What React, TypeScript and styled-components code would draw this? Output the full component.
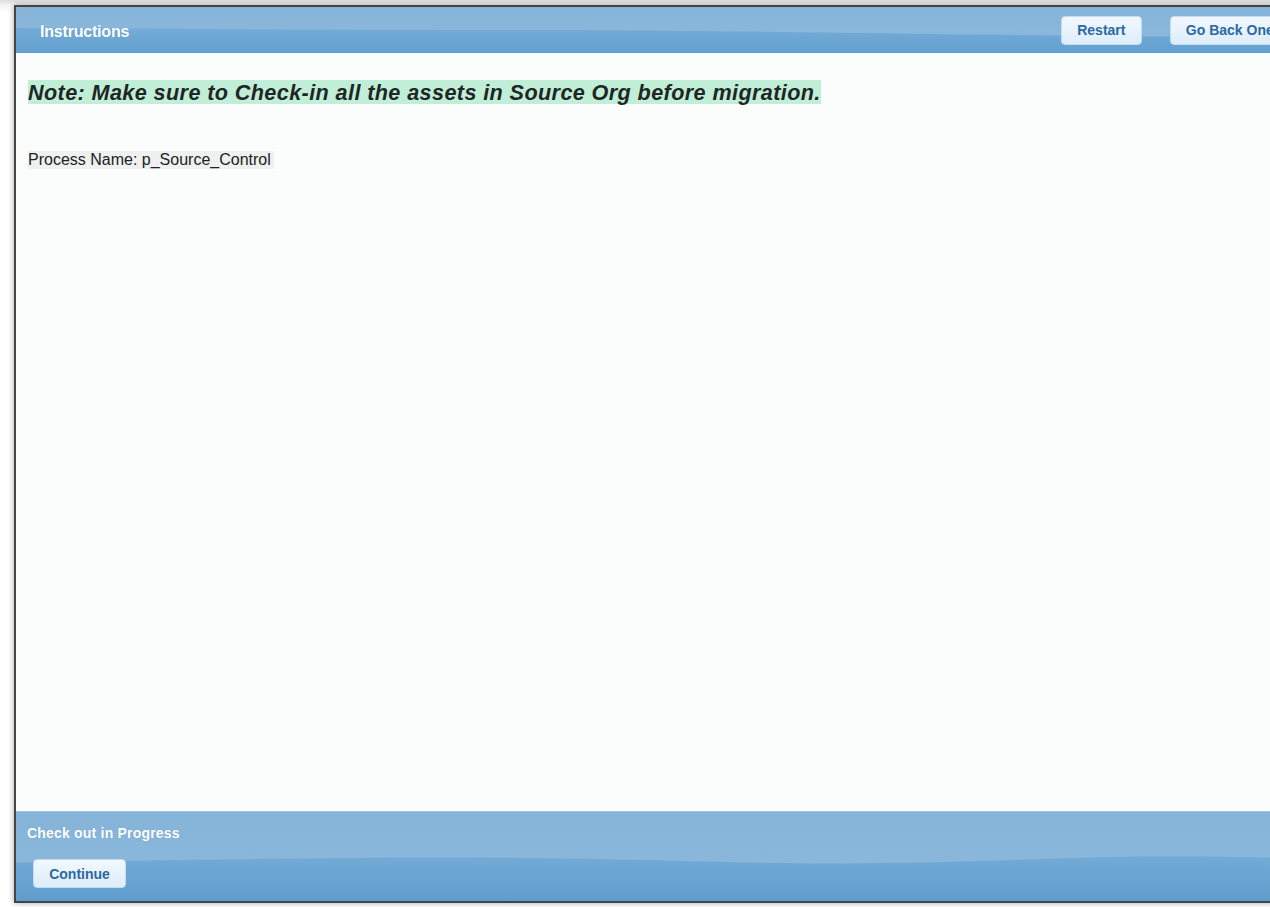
import React from "react";
import styled, { createGlobalStyle } from "styled-components";

const GlobalStyle = createGlobalStyle`
  html, body {
    margin: 0;
    padding: 0;
    background: #ffffff;
    overflow: hidden;
    font-family: "Liberation Sans", Arial, sans-serif;
  }
`;

const Page = styled.div`
  width: 1270px;
  height: 907px;
  overflow: hidden;
  padding: 5px 0 0 14px;
  box-sizing: border-box;
  background: linear-gradient(#dcdcdc 0, #f4f4f4 5px, #ffffff 12px);
`;

const Window = styled.div`
  width: 1308px;
  border: 2px solid #454545;
  box-shadow: 0 0 6px rgba(0, 0, 0, 0.35);
  display: flex;
  flex-direction: column;
  background: #fbfdfc;
`;

const Bar = styled.div<{ $height: number }>`
  position: relative;
  height: ${(p) => p.$height}px;
  background: linear-gradient(#86b4d9, #8cb9dc);
  overflow: hidden;
`;

const Header = styled(Bar)`
  border-bottom: 1px solid #5b9fd7;
  display: flex;
  align-items: center;
  justify-content: space-between;
  padding: 0 0 0 24px;
`;

const Footer = styled(Bar)`
  border-top: 1px solid #9ec4e2;
  box-sizing: border-box;
  display: flex;
  flex-direction: column;
  padding: 13px 0 0 11px;
`;

const Wave = styled.svg`
  position: absolute;
  left: 0;
  top: 0;
  width: 100%;
  height: 100%;
  pointer-events: none;
`;

const Layer = styled.div`
  position: relative;
  display: flex;
  align-items: center;
`;

const Title = styled.span`
  color: #ffffff;
  font-weight: bold;
  font-size: 16px;
  letter-spacing: -0.2px;
  margin-top: 4px;
  text-shadow: 0 0 1px rgba(40, 90, 140, 0.3);
`;

const FooterTitle = styled(Title)`
  font-size: 14px;
  letter-spacing: 0.2px;
  margin-top: 0;
`;

const Actions = styled(Layer)`
  gap: 28px;
  margin-top: 1px;
`;

const Button = styled.button<{ $width?: number }>`
  height: 29px;
  ${(p) => (p.$width ? `width: ${p.$width}px;` : "")}
  padding: 0 15px;
  border: 1px solid #c3dcf0;
  border-radius: 4px;
  background: linear-gradient(#f1f8fe, #ddedfa);
  color: #2c68a1;
  font-family: "Liberation Sans", Arial, sans-serif;
  font-weight: bold;
  font-size: 14px;
  white-space: nowrap;
  cursor: pointer;
`;

const Content = styled.main`
  height: 758px;
  padding: 27px 0 0 12px;
  box-sizing: border-box;
  color: #1e2424;
`;

const Note = styled.p`
  display: inline-block;
  margin: 0;
  padding-top: 1px;
  height: 24px;
  box-sizing: border-box;
  background: #c1eed6;
  font-weight: bold;
  font-style: italic;
  font-size: 21.6px;
  letter-spacing: 0.4px;
  line-height: 24px;
  color: #1e2626;
`;

const ProcessName = styled.p`
  margin: 47px 0 0;
  display: inline-block;
  background: #eef1f0;
  font-size: 16px;
  line-height: 18px;
  padding-right: 3px;
  color: #222;
`;

const ContinueRow = styled(Layer)`
  margin-top: 18px;
  padding-left: 6px;
`;

const App: React.FC = () => (
  <>
    <GlobalStyle />
    <Page>
      <Window>
        <Header $height={45}>
          <Wave viewBox="0 0 1308 45" preserveAspectRatio="none">
            <defs>
              <linearGradient id="hdark" x1="0" y1="0" x2="0" y2="1">
                <stop offset="0" stopColor="#74abd6" />
                <stop offset="1" stopColor="#64a1d0" />
              </linearGradient>
            </defs>
            <path
              d="M0 21 C200 22 400 23 560 23 C760 24 900 28 1308 31 V45 H0 Z"
              fill="url(#hdark)"
            />
          </Wave>
          <Layer>
            <Title>Instructions</Title>
          </Layer>
          <Actions>
            <Button $width={81}>Restart</Button>
            <Button>Go Back One Step</Button>
          </Actions>
        </Header>
        <Content>
          <Note>
            Note: Make sure to Check-in all the assets in Source Org before
            migration.
          </Note>
          <br />
          <ProcessName>Process Name: p_Source_Control</ProcessName>
        </Content>
        <Footer $height={90}>
          <Wave viewBox="0 0 1308 90" preserveAspectRatio="none">
            <defs>
              <linearGradient id="fdark" x1="0" y1="0" x2="0" y2="1">
                <stop offset="0" stopColor="#73aad6" />
                <stop offset="1" stopColor="#5f9dce" />
              </linearGradient>
            </defs>
            <path
              d="M0 51 C150 49 300 46 420 46 C600 46 700 52 820 52 C950 52 1050 45 1150 45 C1230 45 1280 47 1308 47 V90 H0 Z"
              fill="url(#fdark)"
            />
          </Wave>
          <Layer>
            <FooterTitle>Check out in Progress</FooterTitle>
          </Layer>
          <ContinueRow>
            <Button $width={93}>Continue</Button>
          </ContinueRow>
        </Footer>
      </Window>
    </Page>
  </>
);

export default App;
